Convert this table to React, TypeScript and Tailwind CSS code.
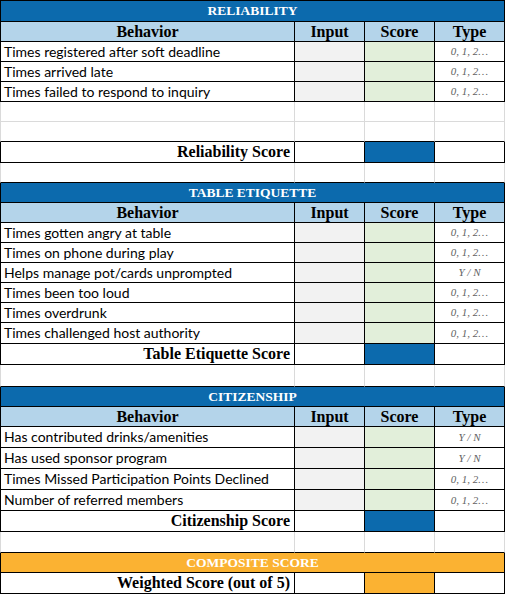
import React from "react";

const SERIF = "[font-family:'Liberation_Serif',serif]";
const SANS = "[font-family:Lato,'Open_Sans',sans-serif]";
const COLS = "grid grid-cols-[295px_70px_70px_70px] grid-rows-[100%] shrink-0 overflow-hidden";

function Title({ label, bg, h, top }: { label: string; bg: string; h: string; top?: boolean }) {
  return (
    <div className={`${COLS} ${h}`}>
      <div
        className={`col-span-4 min-h-0 ${bg} border-l border-r border-b border-black ${top ? "border-t" : ""} flex items-center justify-center text-white font-bold text-[13.5px] leading-none ${SERIF}`}
      >
        {label}
      </div>
    </div>
  );
}

function Header({ h }: { h: string }) {
  const c = `min-h-0 bg-[#b4d4ea] border-r border-b border-black flex items-center justify-center font-bold text-[16px] leading-none text-black ${SERIF}`;
  return (
    <div className={`${COLS} ${h}`}>
      <div className={`${c} border-l`}>Behavior</div>
      <div className={c}>Input</div>
      <div className={c}>Score</div>
      <div className={c}>Type</div>
    </div>
  );
}

function Item({ label, type, h }: { label: string; type: string; h: string }) {
  return (
    <div className={`${COLS} ${h}`}>
      <div className={`min-h-0 border-l border-r border-b border-black bg-white flex items-center pl-[3px] text-[14px] leading-none text-black whitespace-nowrap ${SANS}`}>
        {label}
      </div>
      <div className="min-h-0 border-r border-b border-black bg-[#f2f2f2]" />
      <div className="min-h-0 border-r border-b border-black bg-[#e2efda]" />
      <div className={`min-h-0 border-r border-b border-black bg-white flex items-center justify-center italic text-[11px] leading-none text-[#626262] whitespace-pre ${SERIF}`}>
        {type}
      </div>
    </div>
  );
}

function Blank({ h, dark }: { h: string; dark?: boolean }) {
  const b = dark ? "border-b-black" : "border-b-[#dadada]";
  return (
    <div className={`${COLS} ${h}`}>
      <div className={`min-h-0 border-l border-r border-b border-[#dadada] ${b} bg-white`} />
      <div className={`min-h-0 border-r border-b border-[#dadada] ${b} bg-white`} />
      <div className={`min-h-0 border-r border-b border-[#dadada] ${b} bg-white`} />
      <div className={`min-h-0 border-r border-b border-[#dadada] ${b} bg-white`} />
    </div>
  );
}

function Score({ label, fill, h }: { label: string; fill: string; h: string }) {
  return (
    <div className={`${COLS} ${h}`}>
      <div className={`min-h-0 border-l border-r border-b border-black bg-white flex items-center justify-end pr-[4px] font-bold text-[16px] leading-none text-black whitespace-nowrap ${SERIF}`}>
        {label}
      </div>
      <div className="min-h-0 border-r border-b border-black bg-white" />
      <div className={`min-h-0 border-r border-b border-black ${fill}`} />
      <div className="min-h-0 border-r border-b border-black bg-white" />
    </div>
  );
}

const N = "0, 1, 2…";
const YN = "Y / N";

export default function App() {
  return (
    <div className="w-[507px] h-[595px] bg-white overflow-hidden flex flex-col">
      <Title label="RELIABILITY" bg="bg-[#0c6aad]" h="h-[22px]" top />
      <Header h="h-[20px]" />
      <Item label="Times registered after soft deadline" type={N} h="h-[20px]" />
      <Item label="Times arrived late" type={N} h="h-[20px]" />
      <Item label="Times failed to respond to inquiry" type={N} h="h-[20px]" />
      <Blank h="h-[20px]" />
      <Blank h="h-[20px]" dark />
      <Score label="Reliability Score" fill="bg-[#0c6aad]" h="h-[21px]" />
      <Blank h="h-[20px]" dark />

      <Title label="TABLE ETIQUETTE" bg="bg-[#0c6aad]" h="h-[20px]" />
      <Header h="h-[20px]" />
      <Item label="Times gotten angry at table" type={N} h="h-[20px]" />
      <Item label="Times on phone during play" type={N} h="h-[20px]" />
      <Item label="Helps manage pot/cards unprompted" type={YN} h="h-[20px]" />
      <Item label="Times been too loud" type={N} h="h-[20px]" />
      <Item label="Times overdrunk" type={N} h="h-[20px]" />
      <Item label="Times challenged host authority" type={N} h="h-[21px]" />
      <Score label="Table Etiquette Score" fill="bg-[#0c6aad]" h="h-[21px]" />
      <Blank h="h-[22px]" dark />

      <Title label="CITIZENSHIP" bg="bg-[#0c6aad]" h="h-[20px]" />
      <Header h="h-[20px]" />
      <Item label="Has contributed drinks/amenities" type={YN} h="h-[21px]" />
      <Item label="Has used sponsor program" type={YN} h="h-[21px]" />
      <Item label="Times Missed Participation Points Declined" type={N} h="h-[21px]" />
      <Item label="Number of referred members" type={N} h="h-[21px]" />
      <Score label="Citizenship Score" fill="bg-[#0c6aad]" h="h-[21px]" />
      <Blank h="h-[21px]" dark />

      <Title label="COMPOSITE SCORE" bg="bg-[#fbb232]" h="h-[20px]" />
      <Score label="Weighted Score (out of 5)" fill="bg-[#fbb232]" h="h-[21px]" />
    </div>
  );
}
